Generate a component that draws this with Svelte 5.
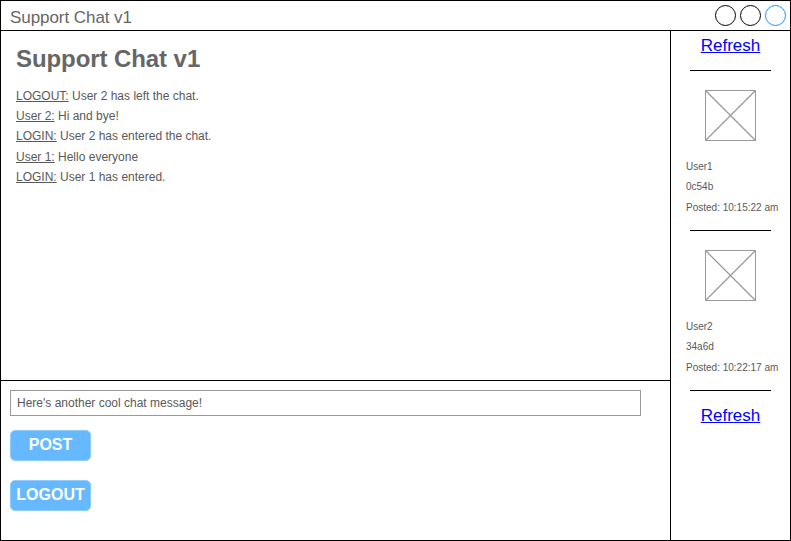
<script>
  const messages = [
    { who: 'LOGOUT:', text: 'User 2 has left the chat.' },
    { who: 'User 2:', text: 'Hi and bye!' },
    { who: 'LOGIN:', text: 'User 2 has entered the chat.' },
    { who: 'User 1:', text: 'Hello everyone' },
    { who: 'LOGIN:', text: 'User 1 has entered.' }
  ];
  const users = [
    { name: 'User1', id: '0c54b', posted: 'Posted: 10:15:22 am' },
    { name: 'User2', id: '34a6d', posted: 'Posted: 10:22:17 am' }
  ];
  let draft = $state("Here's another cool chat message!");
</script>

<div class="window">
  <header>
    <span class="title">Support Chat v1</span>
    <svg class="controls" width="75" height="29" viewBox="0 0 75 29" fill="none">
      <circle cx="10.5" cy="14.5" r="10" stroke="#000" />
      <circle cx="35.5" cy="14.5" r="10" stroke="#000" />
      <circle cx="60.5" cy="14.5" r="10" stroke="#1a93ff" />
    </svg>
  </header>
  <div class="body">
    <main>
      <section class="log">
        <h1>Support Chat v1</h1>
        {#each messages as m}
          <p><u>{m.who}</u> {m.text}</p>
        {/each}
      </section>
      <section class="compose">
        <input type="text" bind:value={draft} />
        <button>POST</button>
        <button>LOGOUT</button>
      </section>
    </main>
    <aside>
      <a href="#top">Refresh</a>
      <hr />
      {#each users as user}
        <div class="user">
          <svg width="51" height="51" viewBox="0 0 51 51" fill="none" stroke="#999">
            <path d="M.5 .5H50.5V50.5H.5Z" />
            <path d="M.5 .5L50.5 50.5M50.5 .5L.5 50.5" stroke-width="1.3" />
          </svg>
          <div class="details">
            <p>{user.name}</p>
            <p>{user.id}</p>
            <p>{user.posted}</p>
          </div>
        </div>
        <hr />
      {/each}
      <a href="#top">Refresh</a>
    </aside>
  </div>
</div>

<style>
  :global(body) { margin: 0; background: #fff; }
  .window {
    box-sizing: border-box;
    width: 791px;
    height: 541px;
    border: 1px solid #000;
    display: flex;
    flex-direction: column;
    font-family: "Liberation Sans", Arial, Helvetica, sans-serif;
    color: #666;
    background: #fff;
    overflow: hidden;
  }
  header {
    height: 29px;
    flex: none;
    border-bottom: 1px solid #000;
    display: flex;
    justify-content: space-between;
  }
  .title { padding-left: 9px; font-size: 17px; line-height: 34px; height: 29px; letter-spacing: -.06px; }
  .controls { flex: none; overflow: visible; }
  .body { flex: 1; display: flex; min-height: 0; }
  main { width: 669px; flex: none; display: flex; flex-direction: column; }
  .log {
    box-sizing: border-box;
    height: 350px;
    border-bottom: 1px solid #000;
    padding: 14px 15px;
  }
  h1 { margin: 0 0 12.8px; font-size: 24px; line-height: 28px; font-weight: 700; letter-spacing: -.08px; }
  .log p { margin: 0; font-size: 12px; line-height: 20.3px; color: #595959; }
  .log u { text-underline-offset: 1px; }
  .compose {
    flex: 1;
    padding: 9px;
    display: flex;
    flex-direction: column;
    align-items: flex-start;
  }
  input {
    box-sizing: border-box;
    width: 631px;
    height: 26px;
    margin: 0 0 14px;
    padding: 0 6px;
    border: 1px solid #999;
    border-radius: 0;
    background: #fff;
    color: #595959;
    font: 12px "Liberation Sans", Arial, sans-serif;
    outline: none;
  }
  button {
    box-sizing: border-box;
    width: 81px;
    height: 31px;
    margin: 0 0 19px;
    padding: 0 0 2px;
    border: 1px solid #90ccff;
    border-radius: 5px;
    background: #66b9ff;
    color: #fff;
    font: bold 16px "Liberation Sans", Arial, sans-serif;
  }
  aside {
    flex: 1;
    border-left: 1px solid #000;
    display: flex;
    flex-direction: column;
    align-items: center;
  }
  a { color: #00f; font-size: 17px; line-height: 20px; margin-top: 5px; }
  hr { width: 81px; height: 1px; margin: 14px 0 0; border: 0; background: #000; }
  .user { width: 119px; margin-top: 19px; display: flex; flex-direction: column; align-items: center; }
  .user svg { display: block; }
  .details { box-sizing: border-box; width: 100%; padding: 16px 0 0 15px; height: 75px; white-space: nowrap; }
  .details p { margin: 0; font-size: 10px; line-height: 20.4px; color: #595959; }
  aside > a:last-child { margin-top: 15px; }
</style>
